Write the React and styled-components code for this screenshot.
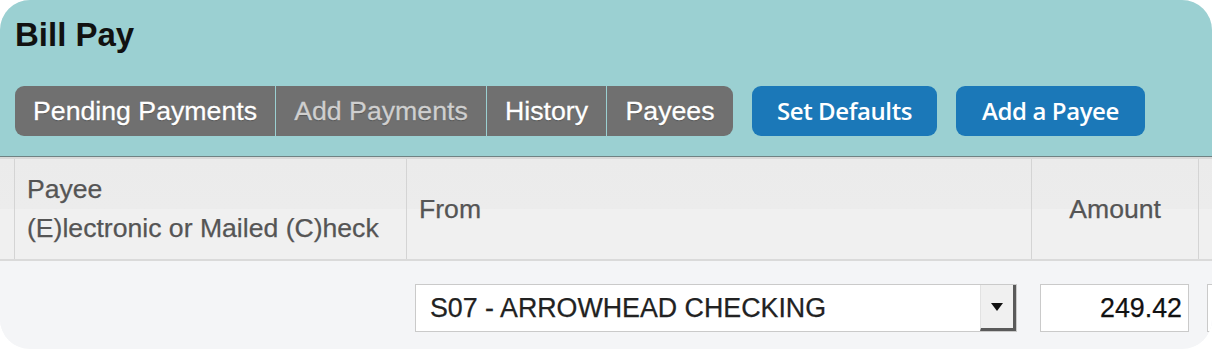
import React from 'react';
import styled, { createGlobalStyle } from 'styled-components';

const GlobalStyle = createGlobalStyle`
  html, body {
    margin: 0;
    padding: 0;
    background-color: #ffffff;
    font-family: 'Liberation Sans', Arial, sans-serif;
  }
`;

const Panel = styled.div`
  width: 1212px;
  height: 349px;
  border-radius: 30px;
  overflow: hidden;
  background-color: #f4f5f7;
`;

const Header = styled.div`
  background-color: #9bd0d2;
  padding: 16px 15px 20px;
  border-bottom: 1px solid #6f8283;
`;

const Title = styled.h1`
  margin: 0 0 33px;
  font-family: 'Liberation Sans', Arial, sans-serif;
  font-size: 33px;
  line-height: 37px;
  font-weight: 700;
  color: #111;
`;

const Toolbar = styled.div`
  display: flex;
  align-items: center;
  gap: 19px;
`;

const TabGroup = styled.div`
  display: flex;
  gap: 1px;
  border-radius: 9px;
  overflow: hidden;
`;

const Tab = styled.div`
  width: ${p => p.$width}px;
  height: 50px;
  display: flex;
  align-items: center;
  justify-content: center;
  background-color: #707070;
  color: ${p => (p.$dim ? '#cfcfcf' : '#ffffff')};
  font-family: 'Liberation Sans', Arial, sans-serif;
  font-size: 26.7px;
  -webkit-text-stroke: 0.3px ${p => (p.$dim ? '#cfcfcf' : '#ffffff')};
  text-shadow: 0 1px 1px rgba(0, 0, 0, 0.25);
  white-space: nowrap;
`;

const ActionButton = styled.button`
  width: ${p => p.$width}px;
  height: 50px;
  border: none;
  border-radius: 9px;
  background-color: #1b78b8;
  color: #ffffff;
  font-family: 'Open Sans', sans-serif;
  font-weight: 600;
  font-size: 24px;
  letter-spacing: -0.4px;
  padding: 0 0 2px;
  cursor: pointer;
`;

const Grid = styled.div`
  display: grid;
  grid-template-columns: 14px 392px 625px 167px 1fr;
`;

const HeadRow = styled(Grid)`
  height: 100px;
  border-top: 2px solid #d9d9d9;
  border-bottom: 2px solid #dadada;
  background: linear-gradient(#ebebeb 0%, #ececec 50%, #f0f0f0 50%, #f0f0f0 100%);
`;

const HeadCell = styled.div`
  display: flex;
  flex-direction: column;
  justify-content: center;
  align-items: ${p => (p.$right ? 'flex-end' : 'flex-start')};
  padding: ${p => (p.$right ? '0 37px 0 0' : '0 12px')};
  border-left: ${p => (p.$first ? 'none' : '1px solid #d4d4d4')};
  color: #555;
  font-family: 'Liberation Sans', Arial, sans-serif;
  font-size: 26.6px;
  line-height: 39px;
  -webkit-text-stroke: 0.25px #555;
  white-space: nowrap;
`;

const BodyRow = styled(Grid)`
  height: 85px;
  background-color: #f4f5f7;
`;

const BodyCell = styled.div`
  padding: 23px 0 0 9px;
`;

const SelectBox = styled.div`
  display: flex;
  width: 602px;
  height: 48px;
  box-sizing: border-box;
  border: 1px solid #cacaca;
  background-color: #fff;
`;

const SelectText = styled.div`
  flex: 1;
  display: flex;
  align-items: center;
  padding-left: 14px;
  font-family: 'Liberation Sans', Arial, sans-serif;
  font-size: 26.8px;
  color: #222;
  -webkit-text-stroke: 0.25px #222;
`;

const SelectArrow = styled.div`
  width: 36px;
  display: flex;
  align-items: center;
  justify-content: center;
  background-color: #f0f0f0;
  border-left: 1px solid #e2e2e2;
  border-right: 3px solid #5a5a5a;
  border-bottom: 3px solid #5a5a5a;
  box-sizing: border-box;
`;

const Field = styled.div`
  width: ${p => p.$width}px;
  height: 48px;
  box-sizing: border-box;
  border: 1px solid #cacaca;
  background-color: #fff;
  display: flex;
  align-items: center;
  justify-content: flex-end;
  padding-right: 6px;
  font-family: 'Liberation Sans', Arial, sans-serif;
  font-size: 26.8px;
  color: #111;
  -webkit-text-stroke: 0.25px #111;
`;

export default function App() {
  return (
    <>
      <GlobalStyle />
      <Panel>
        <Header>
          <Title>Bill Pay</Title>
          <Toolbar>
            <TabGroup>
              <Tab $width={260}>Pending Payments</Tab>
              <Tab $width={210} $dim>Add Payments</Tab>
              <Tab $width={119}>History</Tab>
              <Tab $width={126}>Payees</Tab>
            </TabGroup>
            <ActionButton $width={185}>Set Defaults</ActionButton>
            <ActionButton $width={189}>Add a Payee</ActionButton>
          </Toolbar>
        </Header>
        <HeadRow>
          <HeadCell $first />
          <HeadCell>
            <span>Payee</span>
            <span>(E)lectronic or Mailed (C)heck</span>
          </HeadCell>
          <HeadCell>From</HeadCell>
          <HeadCell $right>Amount</HeadCell>
          <HeadCell />
        </HeadRow>
        <BodyRow>
          <BodyCell />
          <BodyCell />
          <BodyCell>
            <SelectBox>
              <SelectText>S07 - ARROWHEAD CHECKING</SelectText>
              <SelectArrow>
                <svg width="12" height="8" viewBox="0 0 12 8">
                  <path d="M0 0 L12 0 L6 8 Z" fill="#111" />
                </svg>
              </SelectArrow>
            </SelectBox>
          </BodyCell>
          <BodyCell>
            <Field $width={149}>249.42</Field>
          </BodyCell>
          <BodyCell>
            <Field $width={60} />
          </BodyCell>
        </BodyRow>
      </Panel>
    </>
  );
}
